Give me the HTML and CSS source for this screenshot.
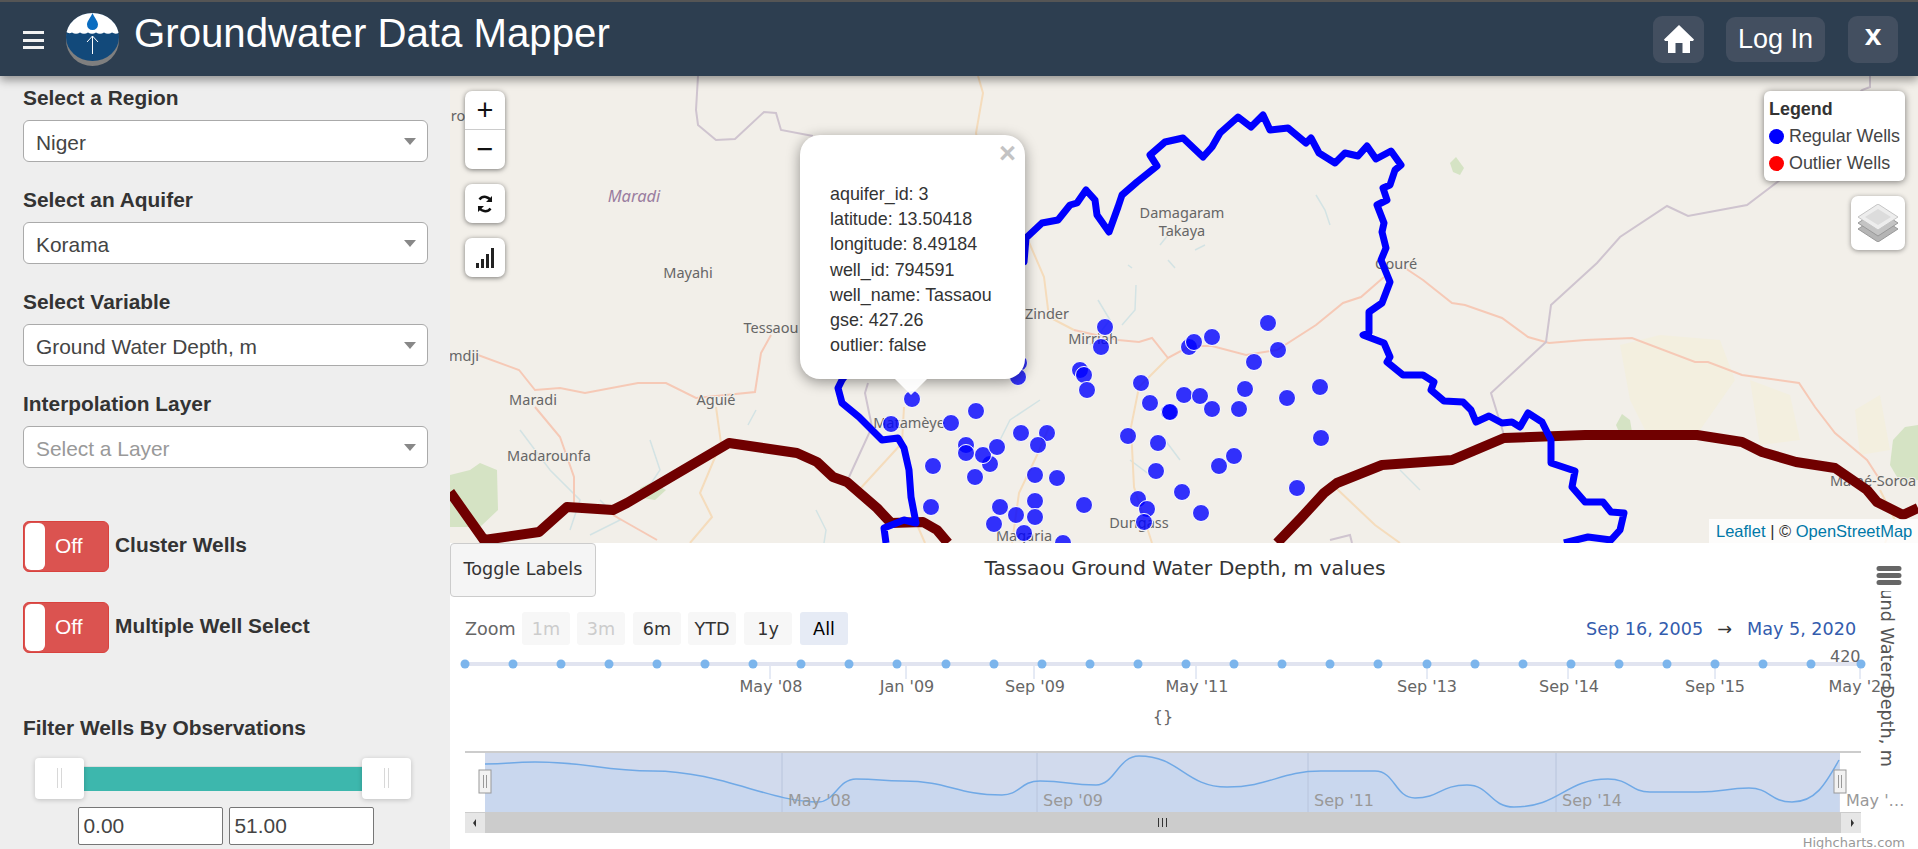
FILE: index.html
```html
<!DOCTYPE html>
<html lang="en">
<head>
<meta charset="utf-8">
<title>Groundwater Data Mapper</title>
<link rel="stylesheet" href="styles.css">
</head>
<body>
<header class="topbar">
  <div class="brand">
    <div class="burger"><span></span><span></span><span></span></div>
    <svg class="logo" viewBox="0 0 54 54" width="54" height="54">
      <defs>
        <clipPath id="logoClip"><ellipse cx="26.5" cy="24" rx="26.5" ry="24"/></clipPath>
      </defs>
      <ellipse class="logo-grey" cx="26.5" cy="27" rx="26.5" ry="26"/>
      <ellipse class="logo-blue" cx="26.5" cy="24" rx="26.5" ry="24"/>
      <path class="logo-white" clip-path="url(#logoClip)" d="M0 0H54V19Q50 22 46 19.500Q42 22 38 19.500Q34 22 30 19.500Q26 22 22 19.500Q18 22 14 19.500Q10 22 6 19.500Q3 21 0 19Z"/>
      <path class="logo-drop" d="M26.500 0C28 4 32 8 32 11.500A5.500 5.500 0 0 1 21 11.500C21 8 25 4 26.500 0Z"/>
      <path class="logo-arrow" d="M26.500 41V23M21 29L26.500 23L32 29"/>
    </svg>
    <h1 class="title">Groundwater Data Mapper</h1>
  </div>
  <nav class="actions">
    <a class="action action-home"><svg viewBox="0 0 30 28" width="30" height="28"><path class="house" d="M15 0L30 14.500L29 16H26V28H18.500V18H11.500V28H4V16H1L0 14.500Z"/></svg></a>
    <a class="action action-login">Log In</a>
    <a class="action action-close">x</a>
  </nav>
</header>

<main class="workspace">
  <aside class="sidebar">
    <div class="field">
      <label class="field-label">Select a Region</label>
      <div class="select">Niger</div>
    </div>
    <div class="field">
      <label class="field-label">Select an Aquifer</label>
      <div class="select">Korama</div>
    </div>
    <div class="field">
      <label class="field-label">Select Variable</label>
      <div class="select">Ground Water Depth, m</div>
    </div>
    <div class="field">
      <label class="field-label">Interpolation Layer</label>
      <div class="select select-empty">Select a Layer</div>
    </div>
    <div class="toggles">
      <div class="toggle-row">
        <div class="toggle"><span class="knob"></span><span class="toggle-text">Off</span></div>
        <span class="field-label toggle-label">Cluster Wells</span>
      </div>
      <div class="toggle-row">
        <div class="toggle"><span class="knob"></span><span class="toggle-text">Off</span></div>
        <span class="field-label toggle-label">Multiple Well Select</span>
      </div>
    </div>
    <div class="filter">
      <label class="field-label">Filter Wells By Observations</label>
      <div class="slider">
        <div class="handle"><i></i><i></i></div>
        <div class="slider-bar"></div>
        <div class="handle"><i></i><i></i></div>
      </div>
      <div class="range-inputs">
        <div class="range-input">0.00</div>
        <div class="range-input">51.00</div>
      </div>
    </div>
  </aside>

  <section class="content">
    <div class="map">
      <svg class="map-canvas" viewBox="450 76 1468 467" width="1468" height="467">
        <g class="m-sand">
          <path d="M1620 345L1660 335L1720 340L1735 380L1700 430L1650 440L1630 400Z"/>
          <path d="M1750 380L1790 395L1800 440L1760 445Z"/>
          <path d="M1855 410L1880 395L1890 450L1860 455Z"/>
        </g>
        <g class="m-green">
          <path d="M450 475L470 470L480 463L497 470L498 510L480 527L450 527Z"/>
          <path d="M1893 440L1905 427L1918 425V480L1900 482L1890 465Z"/>
          <path d="M1616 425L1622 414L1630 420L1632 432L1620 434Z"/>
          <path d="M1450 163L1456 157L1464 168L1460 175L1453 172Z"/>
          <path d="M640 488L652 482L666 490L655 500L642 498Z"/>
        </g>
        <g class="m-water">
          <path d="M1316 195L1325 210L1330 225"/>
          <path d="M1168 235L1160 245"/><path d="M1195 250L1205 245"/>
          <path d="M1168 260L1175 268M1128 265L1132 268"/>
          <path d="M1136 285L1135 310L1122 325"/>
          <path d="M1098 300L1110 320L1090 345"/>
          <path d="M756 410L748 425M650 440L660 470L640 500"/>
          <path d="M520 430L550 470L580 500L570 530"/>
          <path d="M600 500L620 520L590 535"/>
          <path d="M816 510L826 530L824 543"/>
          <path d="M1040 400L1010 420L1000 440"/>
          <path d="M1165 440L1180 460M1130 460L1150 475"/>
          <path d="M1400 470L1420 490"/>
        </g>
        <g class="m-road">
          <path d="M978 76L983 93L976 133L985 180"/>
          <path d="M1000 200L1028 240L1044 277L1049 317L1074 330"/>
          <path d="M716 407L721 443L700 493L712 517L690 543"/>
          <path d="M904 407L902 443L859 490"/>
          <path d="M1049 427L1038 453L1019 493L1012 543"/>
          <path d="M1168 358L1139 387L1131 427L1134 487L1152 543"/>
          <path d="M1336 488L1375 525L1400 543"/>
          <path d="M918 527L925 543"/>
          <path d="M1880 490L1895 520L1885 543"/>
        </g>
        <g class="m-major">
          <path d="M478 355L519 370L535 390L560 388L585 393L638 383L666 383L696 398L755 392L761 353L771 335"/>
          <path d="M535 407L560 437L574 477L574 503"/>
          <path d="M613 515L657 540"/>
          <path d="M1074 330L1118 340L1139 342L1152 338L1168 358L1190 346L1212 346L1246 355L1277 350L1316 325L1343 303L1361 297L1384 277"/>
          <path d="M1405 268L1423 280L1452 303L1465 305L1502 318L1528 337L1549 343L1585 340L1632 338L1695 362L1708 362L1742 375L1799 383L1815 407L1835 433L1867 460L1880 480"/>
        </g>
        <g class="m-border">
          <path d="M698 76L696 110L698 125L716 140L735 139L764 112L776 113L781 130L813 136"/>
          <path d="M1870 76V87L1862 90L1780 180L1747 205L1688 216L1667 206L1620 237L1597 263L1551 305L1546 342L1491 393L1504 435"/>
          <path d="M868 383L865 393L872 427L849 477"/>
          <path d="M1330 540L1350 535L1352 543"/>
        </g>
        <g class="m-labels">
          <text x="458" y="121">ro</text>
          <text class="m-region" x="634" y="202">Maradi</text>
          <text x="688" y="278">Mayahi</text>
          <text x="771" y="333">Tessaou</text>
          <text x="464" y="361">mdji</text>
          <text x="533" y="405">Maradi</text>
          <text x="716" y="405">Aguié</text>
          <text x="549" y="461">Madarounfa</text>
          <text x="1047" y="319">Zinder</text>
          <text x="1093" y="344">Mirriah</text>
          <text x="909" y="428">Matamèye</text>
          <text x="1024" y="541">Magaria</text>
          <text x="1139" y="528">Dungass</text>
          <text x="1182" y="218">Damagaram</text>
          <text x="1182" y="236">Takaya</text>
          <text x="1396" y="269">Gouré</text>
          <text x="1873" y="486">Mainé-Soroa</text>
        </g>
        <polyline class="m-country" points="450,492 484,540 539,532 567,507 613,510 627,503 729,443 797,453 817,462 833,477 847,482 877,508 891,523 923,522 937,530 948,543"/>
        <polyline class="m-country" points="1277,543 1301,518 1324,493 1337,483 1382,465 1452,460 1504,438 1585,435 1697,435 1742,442 1762,452 1796,462 1835,468 1867,490 1877,502 1903,515 1918,508"/>
        <polyline class="m-aquifer" points="886,543 884,528 904,520 916,523 911,497 909,470 904,448 898,438 882,440 859,417 842,403 838,388 842,380 900,300 1024,262 1026,238 1042,223 1058,220 1070,205 1077,203 1086,190 1095,200 1097,215 1109,232 1118,207 1122,195 1137,182 1157,166 1150,155 1165,142 1183,138 1203,157 1212,147 1220,133 1238,117 1251,127 1263,115 1270,130 1288,128 1306,143 1311,138 1319,153 1335,163 1345,153 1358,156 1367,146 1376,159 1391,151 1401,165 1395,170 1390,185 1383,188 1387,200 1377,205 1384,223 1382,232 1386,248 1381,260 1390,282 1382,303 1369,312 1369,333 1363,335 1384,343 1390,357 1387,362 1403,375 1423,375 1434,382 1431,390 1444,401 1463,402 1471,410 1476,422 1489,416 1502,423 1512,422 1520,427 1528,413 1542,422 1551,440 1551,463 1575,471 1572,487 1585,502 1603,502 1611,512 1624,513 1620,530 1611,540 1588,537 1564,543"/>
        <g class="m-wells">
          <circle cx="1105" cy="327" r="8.500"/><circle cx="1101" cy="347" r="8.500"/><circle cx="1080" cy="370" r="8.500"/><circle cx="1084" cy="375" r="8.500"/><circle cx="1087" cy="390" r="8.500"/><circle cx="1141" cy="383" r="8.500"/><circle cx="1150" cy="403" r="8.500"/><circle cx="1169" cy="412" r="8.500"/><circle cx="1128" cy="436" r="8.500"/><circle cx="1158" cy="443" r="8.500"/><circle cx="1156" cy="471" r="8.500"/><circle cx="1138" cy="499" r="8.500"/><circle cx="1147" cy="509" r="8.500"/><circle cx="1144" cy="522" r="8.500"/><circle cx="1084" cy="505" r="8.500"/><circle cx="1057" cy="478" r="8.500"/><circle cx="1035" cy="475" r="8.500"/><circle cx="1035" cy="501" r="8.500"/><circle cx="1035" cy="517" r="8.500"/><circle cx="1016" cy="515" r="8.500"/><circle cx="1000" cy="507" r="8.500"/><circle cx="994" cy="524" r="8.500"/><circle cx="1024" cy="533" r="8.500"/><circle cx="1063" cy="543" r="8.500"/><circle cx="931" cy="507" r="8.500"/><circle cx="975" cy="477" r="8.500"/><circle cx="933" cy="466" r="8.500"/><circle cx="990" cy="464" r="8.500"/><circle cx="983" cy="455" r="8.500"/><circle cx="997" cy="447" r="8.500"/><circle cx="966" cy="445" r="8.500"/><circle cx="966" cy="453" r="8.500"/><circle cx="1021" cy="433" r="8.500"/><circle cx="1047" cy="433" r="8.500"/><circle cx="1038" cy="445" r="8.500"/><circle cx="976" cy="411" r="8.500"/><circle cx="951" cy="423" r="8.500"/><circle cx="891" cy="424" r="8.500"/><circle cx="912" cy="399" r="8.500"/><circle cx="1019" cy="363" r="8.500"/><circle cx="1018" cy="377" r="8.500"/><circle cx="1268" cy="323" r="8.500"/><circle cx="1212" cy="337" r="8.500"/><circle cx="1189" cy="347" r="8.500"/><circle cx="1194" cy="342" r="8.500"/><circle cx="1278" cy="350" r="8.500"/><circle cx="1254" cy="362" r="8.500"/><circle cx="1320" cy="387" r="8.500"/><circle cx="1245" cy="389" r="8.500"/><circle cx="1287" cy="398" r="8.500"/><circle cx="1184" cy="395" r="8.500"/><circle cx="1200" cy="396" r="8.500"/><circle cx="1212" cy="409" r="8.500"/><circle cx="1239" cy="409" r="8.500"/><circle cx="1170" cy="412" r="8.500"/><circle cx="1321" cy="438" r="8.500"/><circle cx="1234" cy="456" r="8.500"/><circle cx="1219" cy="466" r="8.500"/><circle cx="1297" cy="488" r="8.500"/><circle cx="1182" cy="492" r="8.500"/><circle cx="1201" cy="513" r="8.500"/>
        </g>
      </svg>

      <div class="map-controls">
        <div class="ctl ctl-zoom">
          <div class="ctl-btn ctl-plus">+</div>
          <div class="ctl-btn ctl-minus">−</div>
        </div>
        <div class="ctl ctl-single">
          <svg viewBox="0 0 20 20" width="20" height="20"><path class="refresh" d="M16 7.500A6.500 6.500 0 0 0 4.500 5.500M4 12.500A6.500 6.500 0 0 0 15.500 14.500"/><path class="refresh-head" d="M17 2V8H11ZM3 18V12H9Z"/></svg>
        </div>
        <div class="ctl ctl-single">
          <svg viewBox="0 0 18 20" width="18" height="20"><path class="bars" d="M0 15h3v5H0zM5 11h3v9H5zM10 6h3v14h-3zM15 0h3v20h-3z"/></svg>
        </div>
      </div>

      <div class="legend">
        <div class="legend-title">Legend</div>
        <div class="legend-row"><span class="dot dot-blue"></span>Regular Wells</div>
        <div class="legend-row"><span class="dot dot-red"></span>Outlier Wells</div>
      </div>

      <div class="layers">
        <svg viewBox="0 0 40 38" width="40" height="38">
          <path class="lay-3" d="M20 12L40 25L20 38L0 25Z"/>
          <path class="lay-2" d="M20 6L40 19L20 32L0 19Z"/>
          <path class="lay-1" d="M20 0L40 13L20 26L0 13Z"/>
          <path class="lay-0" d="M20 5L33 13L20 21L7 13Z"/>
        </svg>
      </div>

      <div class="attribution"><a>Leaflet</a> | © <a>OpenStreetMap</a></div>

      <div class="popup">
        <span class="popup-close">×</span>
        <div class="popup-body">
          <div>aquifer_id: 3</div>
          <div>latitude: 13.50418</div>
          <div>longitude: 8.49184</div>
          <div>well_id: 794591</div>
          <div>well_name: Tassaou</div>
          <div>gse: 427.26</div>
          <div>outlier: false</div>
        </div>
        <span class="popup-tip"></span>
      </div>
    </div>

    <div class="chart">
      <button class="toggle-labels">Toggle Labels</button>
      <svg class="chart-canvas" viewBox="450 543 1468 306" width="1468" height="306">
        <defs><clipPath id="axisClip"><rect x="1870" y="591" width="40" height="190"/></clipPath></defs>
        <text class="c-title" x="1185" y="575">Tassaou Ground Water Depth, m values</text>
        <text class="c-zoom" x="465" y="635">Zoom</text>
        <g class="c-btn c-off"><rect x="522" y="612" width="48" height="33" rx="3"/><text x="546" y="635">1m</text></g>
        <g class="c-btn c-off"><rect x="577" y="612" width="48" height="33" rx="3"/><text x="601" y="635">3m</text></g>
        <g class="c-btn"><rect x="633" y="612" width="48" height="33" rx="3"/><text x="657" y="635">6m</text></g>
        <g class="c-btn"><rect x="688" y="612" width="48" height="33" rx="3"/><text x="712" y="635">YTD</text></g>
        <g class="c-btn"><rect x="744" y="612" width="48" height="33" rx="3"/><text x="768" y="635">1y</text></g>
        <g class="c-btn c-on"><rect x="800" y="612" width="48" height="33" rx="3"/><text x="824" y="635">All</text></g>
        <text class="c-date" x="1586" y="635">Sep 16, 2005</text>
        <text class="c-date c-arrow" x="1724.500" y="635">→</text>
        <text class="c-date" x="1747" y="635">May 5, 2020</text>
        <path class="c-ticks" d="M770 666V679M906 666V679M1034 666V679M1196 666V679M1427 666V679M1568 666V679M1715 666V679M1860 666V679"/>
        <line class="c-line" x1="465" y1="664" x2="1862" y2="664"/>
        <g class="c-dots">
          <circle cx="465" cy="664" r="4.500"/><circle cx="513" cy="664" r="4.500"/><circle cx="561" cy="664" r="4.500"/><circle cx="609" cy="664" r="4.500"/><circle cx="657" cy="664" r="4.500"/><circle cx="705" cy="664" r="4.500"/><circle cx="753" cy="664" r="4.500"/><circle cx="801" cy="664" r="4.500"/><circle cx="849" cy="664" r="4.500"/><circle cx="897" cy="664" r="4.500"/><circle cx="946" cy="664" r="4.500"/><circle cx="994" cy="664" r="4.500"/><circle cx="1042" cy="664" r="4.500"/><circle cx="1090" cy="664" r="4.500"/><circle cx="1138" cy="664" r="4.500"/><circle cx="1186" cy="664" r="4.500"/><circle cx="1234" cy="664" r="4.500"/><circle cx="1282" cy="664" r="4.500"/><circle cx="1330" cy="664" r="4.500"/><circle cx="1378" cy="664" r="4.500"/><circle cx="1427" cy="664" r="4.500"/><circle cx="1475" cy="664" r="4.500"/><circle cx="1523" cy="664" r="4.500"/><circle cx="1571" cy="664" r="4.500"/><circle cx="1619" cy="664" r="4.500"/><circle cx="1667" cy="664" r="4.500"/><circle cx="1715" cy="664" r="4.500"/><circle cx="1763" cy="664" r="4.500"/><circle cx="1811" cy="664" r="4.500"/><circle cx="1861" cy="664" r="4.500"/>
        </g>
        <text class="c-axis c-left" x="1830" y="662">420</text>
        <g class="c-axis">
          <text x="771" y="692">May '08</text><text x="907" y="692">Jan '09</text><text x="1035" y="692">Sep '09</text><text x="1197" y="692">May '11</text><text x="1427" y="692">Sep '13</text><text x="1569" y="692">Sep '14</text><text x="1715" y="692">Sep '15</text><text x="1860" y="692">May '20</text>
          <text x="1163" y="722">{}</text>
        </g>
        <g clip-path="url(#axisClip)"><text class="c-ytitle" transform="translate(1881 767) rotate(90)" text-anchor="end" x="0" y="0">Ground Water Depth, m</text></g>
        <path class="c-menu" d="M1879 568.500H1899M1879 575.500H1899M1879 582.500H1899"/>

        <line class="c-navtop" x1="465" y1="752" x2="1861" y2="752"/>
        <rect class="c-mask" x="485" y="753" width="1355" height="59"/>
        <path class="c-area" d="M485 764C510 764 510 762 535 762C590 762 600 771 653 771C720 771 770 802 818 802C835 802 838 779 856 779C880 779 880 781 903 781C950 781 955 795 1002 795C1020 795 1020 781 1040 781C1068 781 1068 785 1096 785C1115 785 1118 756 1139 756C1180 756 1185 787 1227 787C1270 787 1280 771 1321 771C1350 771 1350 771 1375 771C1395 771 1395 798 1415 798C1440 798 1440 785 1467 785C1490 785 1490 807 1514 807C1560 807 1565 779 1608 779C1630 779 1630 792 1650 792C1675 792 1675 792 1698 792C1725 792 1725 788 1749 788C1770 788 1770 802 1792 802C1815 802 1825 785 1839 760V812H485Z"/>
        <path class="c-grid" d="M782 753V812M1037 753V812M1308 753V812M1556 753V812"/>
        <path class="c-series" d="M485 764C510 764 510 762 535 762C590 762 600 771 653 771C720 771 770 802 818 802C835 802 838 779 856 779C880 779 880 781 903 781C950 781 955 795 1002 795C1020 795 1020 781 1040 781C1068 781 1068 785 1096 785C1115 785 1118 756 1139 756C1180 756 1185 787 1227 787C1270 787 1280 771 1321 771C1350 771 1350 771 1375 771C1395 771 1395 798 1415 798C1440 798 1440 785 1467 785C1490 785 1490 807 1514 807C1560 807 1565 779 1608 779C1630 779 1630 792 1650 792C1675 792 1675 792 1698 792C1725 792 1725 788 1749 788C1770 788 1770 802 1792 802C1815 802 1825 785 1839 760"/>
        <g class="c-navlabels">
          <text x="788" y="806">May '08</text><text x="1043" y="806">Sep '09</text><text x="1314" y="806">Sep '11</text><text x="1562" y="806">Sep '14</text><text x="1846" y="806">May '…</text>
        </g>
        <g class="c-handle">
          <rect x="479" y="770" width="12" height="23"/><path d="M483.500 775V788M486.500 775V788"/>
          <rect x="1834" y="770" width="12" height="23"/><path d="M1838.500 775V788M1841.500 775V788"/>
        </g>
        <rect class="c-scroll" x="465" y="812" width="1396" height="21"/>
        <rect class="c-scrollbtn" x="465" y="813" width="20" height="20"/>
        <rect class="c-scrollbtn" x="1841" y="813" width="20" height="20"/>
        <path class="c-arrowhead" d="M476 819V827L473 823ZM1851 819V827L1854 823Z"/>
        <path class="c-grip" d="M1158.500 818V827M1162.500 818V827M1166.500 818V827"/>
        <text class="c-credit" x="1905" y="847">Highcharts.com</text>
      </svg>
    </div>
  </section>
</main>
</body>
</html>
```
FILE: styles.css
```css
* { box-sizing: border-box; }
html, body { margin: 0; height: 849px; overflow: hidden; }
body { display: flex; flex-direction: column; font-family: "Liberation Sans", Arial, sans-serif; color: #333; background: #fff; }

.topbar { position: relative; z-index: 5; flex: 0 0 76px; display: flex; justify-content: space-between; align-items: center; background: #2d3e50; border-top: 2px solid #555; box-shadow: 0 4px 9px rgba(0,0,0,.4); }
.brand { display: flex; align-items: center; }
.burger { display: flex; flex-direction: column; gap: 4.500px; width: 21px; margin-left: 23px; margin-top: 2px; }
.burger span { height: 3px; background: #f2f2f2; }
.logo { margin-left: 22px; margin-top: 1px; }
.logo-grey { fill: #7f7f7f; }
.logo-blue { fill: #12497a; }
.logo-white { fill: #fff; }
.logo-drop { fill: #0a6cc0; }
.logo-arrow { fill: none; stroke: #fff; stroke-width: 1; }
.title { margin: 0 0 9px 14px; font-size: 40.200px; font-weight: 400; color: #fff; line-height: 1.1; }
.actions { display: flex; align-items: center; margin-right: 20px; }
.action { display: flex; align-items: center; justify-content: center; background: #434f60; border-radius: 9px; color: #fff; }
.action-home { width: 51px; height: 47px; }
.action-login { width: 99px; height: 45px; margin-left: 22px; font-size: 27px; }
.action-close { width: 50px; height: 47px; margin-left: 23px; font-size: 30px; font-weight: 700; padding-bottom: 9px; }
.house { fill: #fff; }

.workspace { flex: 1; display: flex; min-height: 0; }
.sidebar { flex: 0 0 450px; padding: 10px 22px 0 23px; background: #eee; }
.field { margin-bottom: 26px; }
.field-label { display: block; font-size: 20.900px; font-weight: 700; line-height: 24px; color: #333; }
.select { position: relative; height: 42px; margin-top: 10px; padding: 1px 0 0 12px; background: #fff; border: 1px solid #aaa; border-radius: 6px; font-size: 20.900px; line-height: 42px; color: #444; }
.select::after { content: ""; position: absolute; right: 11px; top: 17px; border-left: 6px solid transparent; border-right: 6px solid transparent; border-top: 7px solid #888; }
.select-empty { color: #999; }
.toggles { display: flex; flex-direction: column; gap: 30px; padding-top: 27px; }
.toggle-row { display: flex; align-items: center; gap: 6px; }
.toggle-label { margin-bottom: 4px; }
.toggle { position: relative; width: 86px; height: 51px; background: #db5350; border: 1px solid #d9423e; border-radius: 6px; }
.knob { position: absolute; left: 1px; top: 1px; width: 20px; height: 47px; background: #fff; border-radius: 6px; }
.toggle-text { position: absolute; left: 31px; top: 0; font-size: 20.900px; line-height: 47px; color: #fff; }
.filter { margin-top: 63px; }
.slider { display: flex; align-items: center; height: 41px; margin: 18px 17px 0 12px; }
.slider-bar { flex: 1; height: 25px; background: #3db7ad; border-top: 1px solid #ddd; }
.handle { position: relative; z-index: 1; display: flex; justify-content: center; gap: 3px; padding-top: 10px; flex: 0 0 49px; height: 41px; background: #fff; border-radius: 4px; box-shadow: 0 1px 5px rgba(0,0,0,.2); }
.handle i { width: 1px; height: 20px; background: #d8d8d8; }
.range-inputs { display: flex; justify-content: center; gap: 6px; margin-top: 8px; }
.range-input { width: 145px; height: 38px; padding-left: 5px; background: #fff; border: 1px solid #767676; border-radius: 2px; font-size: 20.900px; line-height: 36px; color: #444; }

.content { flex: 1; min-width: 0; display: flex; flex-direction: column; }
.map { position: relative; flex: 0 0 467px; overflow: hidden; background: #f2efe9; }
.map-canvas { display: block; }
.m-green path { fill: #d5e3c4; }
.m-sand path { fill: #f3efdf; }
.m-water path { fill: none; stroke: #d3e3e4; stroke-width: 1.500; }
.m-road path { fill: none; stroke: #f5dcbc; stroke-width: 2; }
.m-major path { fill: none; stroke: #f6c9b6; stroke-width: 2; }
.m-border path { fill: none; stroke: #cfc4cf; stroke-width: 2; }
.m-labels text { font-family: "Noto Sans", sans-serif; font-size: 14.500px; fill: #666; text-anchor: middle; stroke: #f2efe9; stroke-width: 2px; paint-order: stroke; }
.m-labels .m-region { font-size: 16.500px; font-style: italic; fill: #9a7da0; }
.m-country { fill: none; stroke: #700000; stroke-width: 10; stroke-linejoin: round; }
.m-aquifer { fill: none; stroke: #0000ff; stroke-width: 7; stroke-linejoin: round; }
.m-wells circle { fill: rgba(0,0,255,.8); stroke: #fff; stroke-width: 1; }

.map-controls { position: absolute; left: 15px; top: 15px; display: flex; flex-direction: column; gap: 15px; }
.ctl { width: 40px; background: #fff; border-radius: 7px; box-shadow: 0 1px 5px rgba(0,0,0,.5); }
.ctl-single { display: flex; align-items: center; justify-content: center; height: 39px; }
.ctl-btn { display: flex; align-items: center; justify-content: center; height: 39px; font-size: 29px; color: #111; }
.ctl-plus { border-bottom: 1px solid #ccc; }
.refresh { fill: none; stroke: #111; stroke-width: 2.500; }
.refresh-head { fill: #111; }
.bars { fill: #222; }
.legend { position: absolute; right: 13px; top: 15px; width: 141px; height: 90px; padding: 6px 0 0 5px; background: #fff; border-radius: 6px; box-shadow: 0 1px 7px rgba(0,0,0,.5); font-size: 17.900px; color: #444; }
.legend-title { font-weight: 700; color: #333; line-height: 24px; }
.legend-row { display: flex; align-items: center; gap: 5px; height: 27px; padding-top: 4px; }
.dot { width: 15px; height: 15px; border-radius: 50%; }
.dot-blue { background: #00f; }
.dot-red { background: #f00; }
.layers { position: absolute; right: 13px; top: 120px; display: flex; align-items: center; justify-content: center; width: 54px; height: 54px; background: #fff; border-radius: 7px; box-shadow: 0 1px 5px rgba(0,0,0,.4); }
.lay-3 { fill: #b5b5b5; stroke: #999; }
.lay-2 { fill: #c4c4c4; stroke: #999; }
.lay-1 { fill: #ededed; stroke: #c4c4c4; }
.lay-0 { fill: #dcdcdc; }
.attribution { position: absolute; right: 0; bottom: 0; width: 209px; height: 24px; padding-left: 7px; background: rgba(255,255,255,.8); font-size: 16.500px; line-height: 24px; color: #333; white-space: nowrap; }
.attribution a { color: #0078a8; }
.popup { position: absolute; left: 350px; top: 59px; width: 225px; height: 244px; background: #fff; border-radius: 20px; box-shadow: 0 3px 14px rgba(0,0,0,.4); }
.popup-close { position: absolute; right: 9px; top: 3px; font-size: 29px; line-height: 30px; font-weight: 700; color: #c3c3c3; }
.popup-body { padding: 47px 0 0 30px; font-size: 17.900px; line-height: 25.200px; color: #333; }
.popup-tip { position: absolute; left: 95px; top: 244px; width: 32px; height: 16px; background: rgba(255,255,255,.92); clip-path: polygon(0 0, 100% 0, 50% 100%); }

.chart { position: relative; flex: 1; min-height: 0; background: #fff; overflow: hidden; }
.chart-canvas { display: block; }
.toggle-labels { position: absolute; left: 0; top: 0; width: 146px; height: 54px; padding: 0 0 3px; background: #f5f5f5; border: 1px solid #ccc; border-radius: 4px; font-family: "DejaVu Sans", sans-serif; font-size: 17.600px; color: #333; }
.chart-canvas text { font-family: "DejaVu Sans", sans-serif; }
.c-title { font-size: 20.300px; fill: #333; text-anchor: middle; }
.c-zoom { font-size: 17.600px; fill: #666; }
.c-btn rect { fill: #f7f7f7; }
.c-btn text { font-size: 17.600px; fill: #333; text-anchor: middle; }
.c-off text { fill: #ccc; }
.c-on rect { fill: #e6ebf5; }
.c-on text { fill: #000; }
.c-date { font-size: 17.600px; fill: #335cad; }
.c-arrow { fill: #333; text-anchor: middle; }
.c-ticks { fill: none; stroke: #ccd6eb; stroke-width: 1; }
.c-line { stroke: #e1e4f0; stroke-width: 4; }
.c-dots circle { fill: #7cb5ec; }
.c-axis text, .c-axis { font-size: 16px; fill: #666; text-anchor: middle; }
.c-left { text-anchor: start; }
.c-ytitle { font-size: 17.600px; fill: #555; }
.c-menu { fill: none; stroke: #666; stroke-width: 5; stroke-linecap: round; }
.c-navtop { stroke: #ccc; stroke-width: 2; }
.c-mask { fill: #d1daed; }
.c-area { fill: #c9d7ee; }
.c-grid { fill: none; stroke: #b8c4dc; stroke-width: 1; }
.c-series { fill: none; stroke: #70a9e6; stroke-width: 1.500; }
.c-navlabels text { font-size: 16px; fill: #999; }
.c-handle rect { fill: #f2f2f2; stroke: #999; stroke-width: 1; }
.c-handle path { fill: none; stroke: #999; stroke-width: 1; }
.c-scroll { fill: #ccc; }
.c-scrollbtn { fill: #e6e6e6; }
.c-arrowhead { fill: #333; }
.c-grip { fill: none; stroke: #333; stroke-width: 1; }
.c-credit { font-size: 13px; fill: #999; text-anchor: end; }
```
